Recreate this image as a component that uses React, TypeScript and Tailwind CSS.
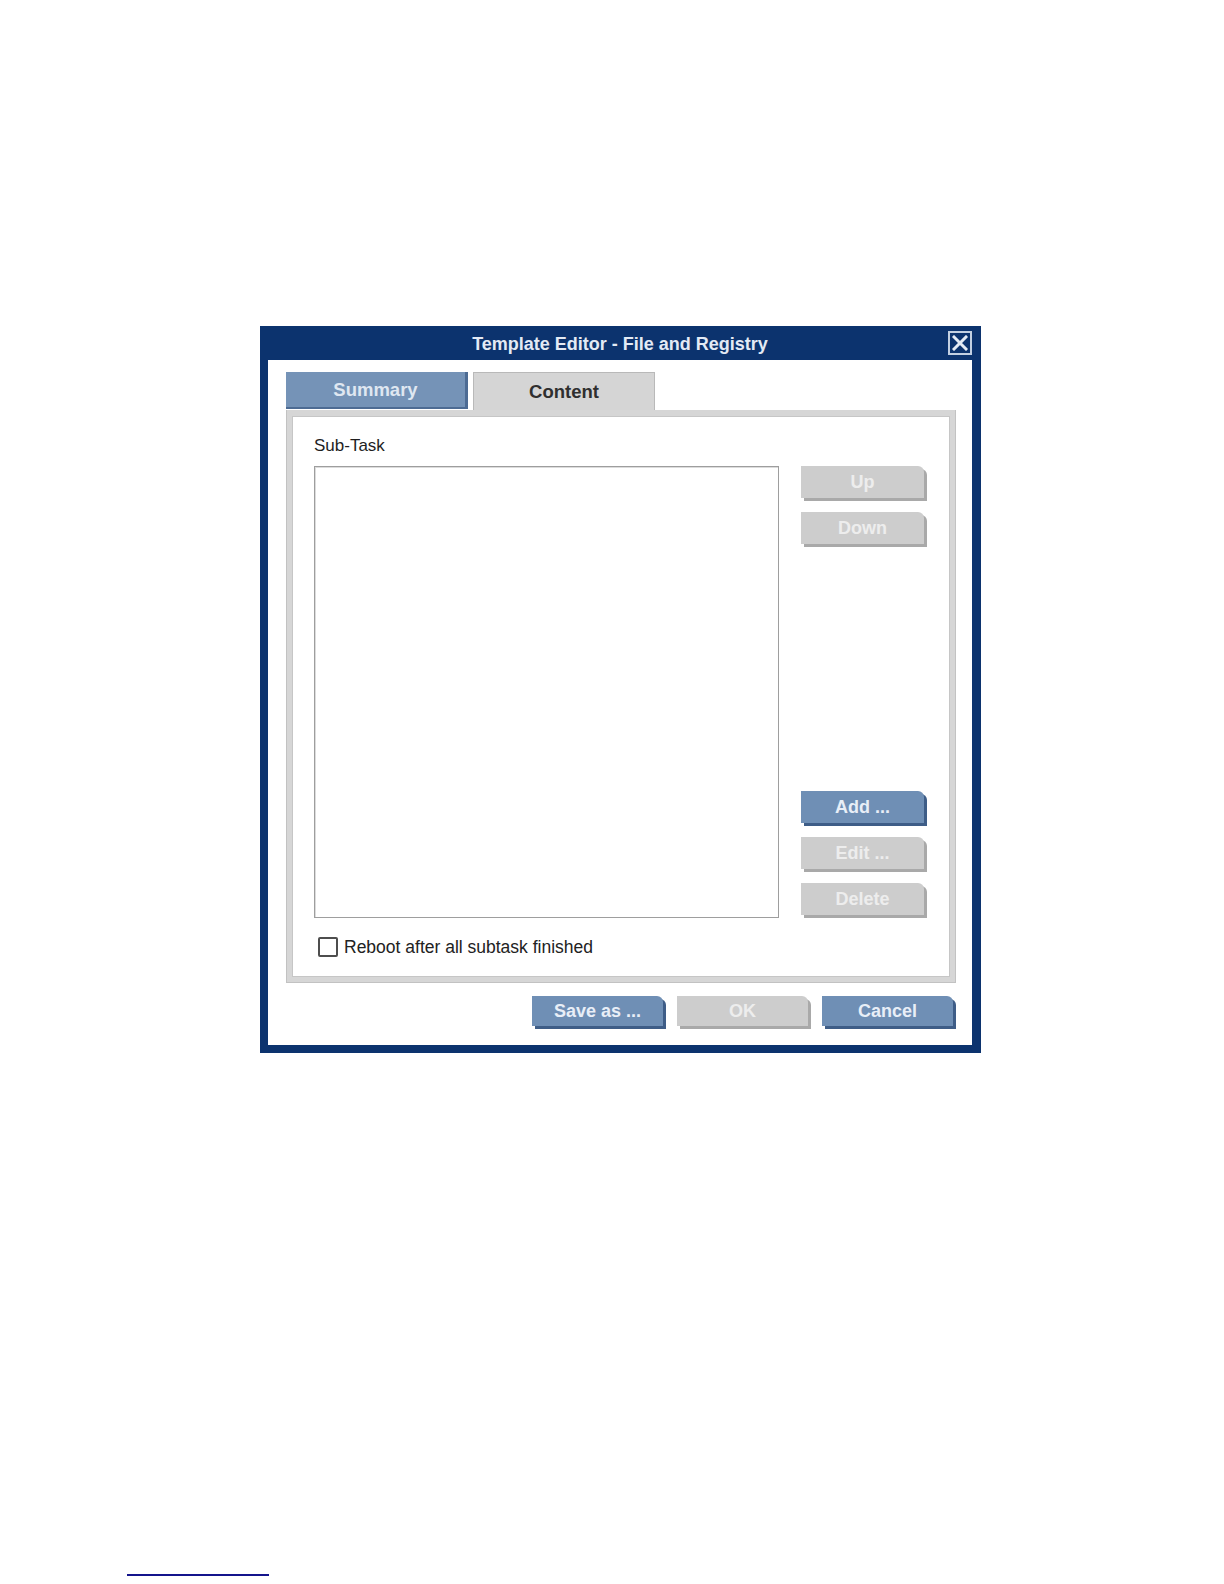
import React from 'react';

const font = "font-['Liberation_Sans',Arial,sans-serif]";

interface BtnProps {
  label: string;
  enabled?: boolean;
  size?: 'side' | 'footer';
}

const DialogButton = ({ label, enabled = false, size = 'side' }: BtnProps) => {
  const dims = size === 'side' ? 'w-[123px] h-[32px]' : 'w-[131px] h-[30px]';
  const look = enabled
    ? 'bg-[#6f8fb5] text-[#e8eef7] shadow-[3px_3px_0_#3e5d87]'
    : 'bg-[#cdcdcd] text-[#ededed] shadow-[3px_3px_0_#a9a9a9]';
  return (
    <div className="pr-[3px] pb-[3px]">
      <div className={`${dims} ${look} rounded-tr-[6px] flex items-center justify-center text-[18px] font-bold`}>
        {label}
      </div>
    </div>
  );
};

const CloseIcon = () => (
  <div className="w-[24px] h-[24px] border-2 border-[#c3d0e2] flex items-center justify-center">
    <svg width="16" height="16" viewBox="0 0 16 16">
      <path d="M2 2 L14 14 M14 2 L2 14" stroke="#e4ebf5" strokeWidth="3" strokeLinecap="square" />
    </svg>
  </div>
);

export default function App() {
  return (
    <div className={`w-[1224px] h-[1584px] bg-white flex flex-col ${font}`}>
      {/* Dialog */}
      <div className="ml-[260px] mt-[326px] w-[721px] h-[727px] bg-[#0c336e] flex flex-col pl-[8px] pr-[9px] pb-[8px]">
        {/* Title bar */}
        <div className="h-[34px] grid grid-cols-[1fr_auto_1fr] items-center">
          <div />
          <div className="text-[18px] font-bold text-[#e3eaf5] pt-[3px]">Template Editor - File and Registry</div>
          <div className="flex justify-end">
            <CloseIcon />
          </div>
        </div>

        {/* Body */}
        <div className="flex-1 bg-white flex flex-col pl-[18px] pt-[12px]">
          {/* Tabs */}
          <div className="flex gap-[5px] h-[38px]">
            <div className="w-[182px] h-[37px] bg-[#7593b7] border-r-[3px] border-b-[2px] border-[#4d6b93] flex items-center justify-center text-[18.5px] font-bold text-[#dfe7f1]">
              Summary
            </div>
            <div className="w-[182px] h-[38px] bg-[#d5d5d5] border border-b-0 border-[#b9b9b9] flex items-center justify-center text-[18.5px] font-bold text-[#2f2f2f]">
              Content
            </div>
          </div>

          {/* Panel */}
          <div className="w-[670px] h-[573px] bg-[#d6d6d6] border border-t-0 border-[#c2c2c2] pt-[6px] px-[5px] pb-[5px]">
            <div className="w-full h-full bg-white border border-[#c6c6c6] flex flex-col pl-[21px] pt-[19px]">
              <div className="text-[17px] leading-[20px] text-[#1e1e1e]">Sub-Task</div>

              <div className="flex mt-[10px]">
                <div className="w-[465px] h-[452px] bg-white border border-[#9e9e9e] shadow-[inset_1px_1px_0_#dcdcdc]" />
                <div className="ml-[22px] flex flex-col justify-between h-[452px]">
                  <div className="flex flex-col gap-[11px]">
                    <DialogButton label="Up" />
                    <DialogButton label="Down" />
                  </div>
                  <div className="flex flex-col gap-[11px]">
                    <DialogButton label="Add ..." enabled />
                    <DialogButton label="Edit ..." />
                    <DialogButton label="Delete" />
                  </div>
                </div>
              </div>

              {/* Reboot checkbox */}
              <div className="flex items-center mt-[16px] ml-[4px]">
                <div className="w-[20px] h-[20px] border-2 border-[#4e4e4e] rounded-[2px] bg-white" />
                <span className="ml-[6px] text-[17.5px] text-[#222222]">Reboot after all subtask finished</span>
              </div>
            </div>
          </div>

          {/* Footer buttons */}
          <div className="w-[670px] flex justify-end gap-[11px] mt-[13px]">
            <DialogButton label="Save as ..." enabled size="footer" />
            <DialogButton label="OK" size="footer" />
            <DialogButton label="Cancel" enabled size="footer" />
          </div>
        </div>
      </div>

      {/* Footnote separator */}
      <div className="ml-[127px] mt-[521px] w-[142px] h-[2px] bg-[#14148c]" />
    </div>
  );
}
